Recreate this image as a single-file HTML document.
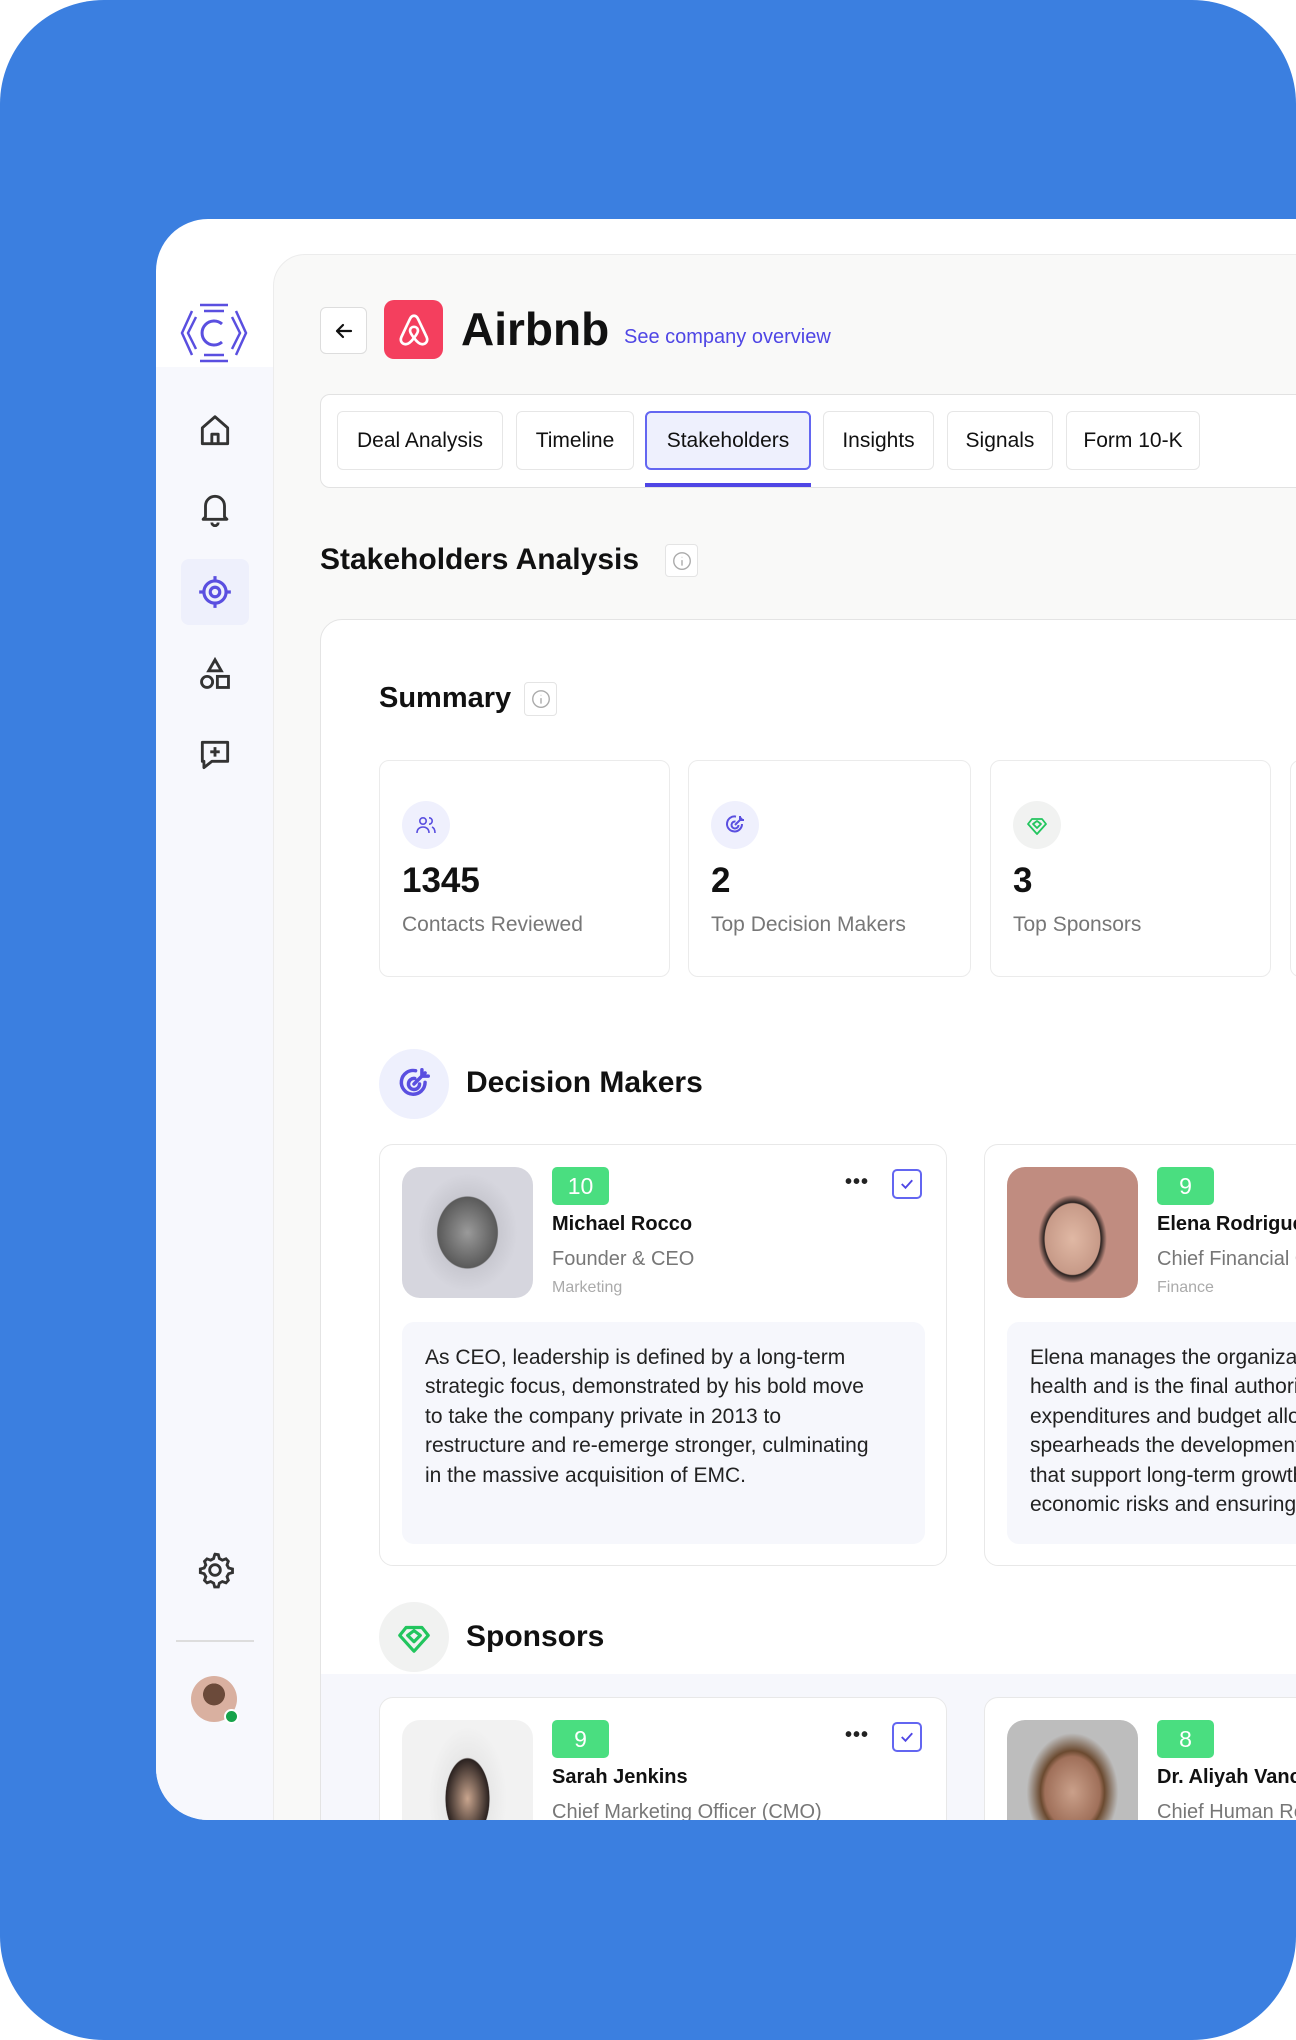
<!DOCTYPE html>
<html><head><meta charset="utf-8"><style>
*{margin:0;padding:0;box-sizing:border-box}
html,body{width:1296px;height:2040px;overflow:hidden}
body{background:#fff;font-family:"Liberation Sans",sans-serif;position:relative}
.wrap{position:absolute;left:0;top:0;width:1296px;height:2040px;overflow:hidden}
.clip{position:absolute;left:0;top:0;width:1296px;height:1820px;overflow:hidden}
.bg{position:absolute;left:0;top:0;width:1296px;height:2040px;background:#3b7fe0;border-radius:104px}
.panel{position:absolute;left:156px;top:219px;width:1140px;height:1601px;background:#fff;border-radius:52px 0 0 52px;overflow:hidden}
.side{position:absolute;left:0;top:148px;width:117px;height:1500px;background:#f7f8fd}
.ab{position:absolute}
.main{position:absolute;left:117px;top:35px;width:1200px;height:1600px;background:#f9f9f8;border:1px solid #ececec;border-radius:32px 0 0 0}
.tab{position:absolute;top:411px;height:59px;border:1px solid #e6e6e6;border-radius:6px;background:#fff;font-size:21px;color:#111;display:flex;align-items:center;justify-content:center}
.info{position:absolute;border:1px solid #e4e4e4;border-radius:4px;background:#fff;display:flex;align-items:center;justify-content:center}
.stat{position:absolute;top:760px;height:217px;border:1px solid #ebebeb;border-radius:10px;background:#fff}
.stat .ic{position:absolute;left:22px;top:40px;width:48px;height:48px;border-radius:50%;background:#eff0fd;display:flex;align-items:center;justify-content:center}
.stat .n{position:absolute;left:22px;top:100px;font-size:35px;font-weight:bold;color:#111}
.stat .l{position:absolute;left:22px;top:152px;font-size:21px;color:#777}
.card{position:absolute;width:568px;height:422px;border:1px solid #e8e8e8;border-radius:14px;background:#fff}
.photo{position:absolute;left:22px;top:22px;width:131px;height:131px;border-radius:18px}
.badge{position:absolute;left:172px;top:22px;width:57px;height:38px;background:#4ade80;border-radius:5px;color:#fff;font-size:23px;display:flex;align-items:center;justify-content:center}
.nm{position:absolute;left:172px;top:68px;font-size:20px;font-weight:bold;color:#111;white-space:nowrap}
.tt{position:absolute;left:172px;top:103px;font-size:20px;color:#777;white-space:nowrap}
.dp{position:absolute;left:172px;top:134px;font-size:16px;color:#aaa}
.dots{position:absolute;left:465px;top:26px;font-size:20px;font-weight:bold;letter-spacing:1px;color:#222}
.chk{position:absolute;left:512px;top:24px;width:30px;height:30px;border:2px solid #6366f1;border-radius:5px;display:flex;align-items:center;justify-content:center}
.desc{position:absolute;left:22px;top:177px;width:523px;height:222px;background:#f6f7fc;border-radius:12px;padding:21px 23px;font-size:21px;line-height:29.4px;color:#222;white-space:nowrap;overflow:hidden}
.sec{position:absolute;left:379px;width:70px;height:70px;border-radius:50%;display:flex;align-items:center;justify-content:center}
.sect{position:absolute;left:466px;font-size:30px;font-weight:bold;color:#111}
</style></head><body>
<div class="wrap">
<div class="bg"></div>
<div class="clip">
<div class="panel">
  <div class="side"></div>
  <svg class="ab" style="left:22px;top:78px" width="72" height="72" viewBox="0 0 72 72" fill="none" stroke="#5a4fe0" stroke-width="2.5">
    <path d="M22 8 L50 8 M14 14 L4 36 L14 58 M58 14 L68 36 L58 58 M22 64 L50 64"/>
    <path d="M18 20 L10 36 L18 52 M54 20 L62 36 L54 52 M26 14 L46 14 M26 58 L46 58"/>
    <path d="M44 27 A12 12 0 1 0 44 45" stroke-width="3"/>
  </svg>
  <svg class="ab" style="left:40px;top:193px" width="38" height="38" viewBox="0 0 24 24" fill="none" stroke="#333" stroke-width="1.8" stroke-linejoin="round"><path d="M4 10 L12 3 L20 10 V20 H4 Z M10 20 V14 H14 V20"/></svg>
  <svg class="ab" style="left:40px;top:271px" width="38" height="38" viewBox="0 0 24 24" fill="none" stroke="#333" stroke-width="1.8" stroke-linejoin="round"><path d="M6 17 V10 a6 6 0 0 1 12 0 V17 L19.5 18.5 H4.5 Z M10 20.5 a2 2 0 0 0 4 0"/></svg>
  <div class="ab" style="left:25px;top:340px;width:68px;height:66px;background:#eef0fc;border-radius:8px"></div>
  <svg class="ab" style="left:40px;top:354px" width="38" height="38" viewBox="0 0 24 24" fill="none" stroke="#5a4fe0" stroke-width="2"><circle cx="12" cy="12" r="7"/><circle cx="12" cy="12" r="3"/><path d="M12 2v3M12 19v3M2 12h3M19 12h3"/></svg>
  <svg class="ab" style="left:40px;top:436px" width="38" height="38" viewBox="0 0 24 24" fill="none" stroke="#333" stroke-width="1.8"><path d="M12 3 L16 10 H8 Z"/><circle cx="7" cy="17" r="3.5"/><rect x="13.5" y="13.5" width="7" height="7"/></svg>
  <svg class="ab" style="left:40px;top:517px" width="38" height="38" viewBox="0 0 24 24" fill="none" stroke="#333" stroke-width="1.8" stroke-linejoin="round"><path d="M4 4 H20 V16 H10 L5 20 V16 H4 Z M12 7 V13 M9 10 H15"/></svg>
  <svg class="ab" style="left:39px;top:1331px" width="40" height="40" viewBox="0 0 24 24" fill="none" stroke="#333" stroke-width="1.7"><circle cx="12" cy="12" r="3.2"/><path d="M12 2.5l2 .3.6 2.3 1.8 1 2.2-.8 1.4 1.5-.8 2.2 1 1.8 2.3.6v2.2l-2.3.6-1 1.8.8 2.2-1.4 1.5-2.2-.8-1.8 1-.6 2.3h-2.2l-.6-2.3-1.8-1-2.2.8-1.5-1.5.8-2.2-1-1.8-2.3-.6v-2.2l2.3-.6 1-1.8-.8-2.2 1.5-1.5 2.2.8 1.8-1 .6-2.3z"/></svg>
  <div class="ab" style="left:20px;top:1421px;width:78px;height:2px;background:#ddd"></div>
  <div class="ab" style="left:35px;top:1457px;width:46px;height:46px;border-radius:50%;background:radial-gradient(circle at 50% 40%,#6b4a3a 0 30%,#d9b0a0 31% 100%)"></div>
  <div class="ab" style="left:68px;top:1490px;width:15px;height:15px;border-radius:50%;background:#16a34a;border:2px solid #fff"></div>
  <div class="main"></div>
</div>

<div class="ab" style="left:320px;top:307px;width:47px;height:47px;border:1px solid #ddd;border-radius:6px;background:#fff;display:flex;align-items:center;justify-content:center">
<svg width="24" height="24" viewBox="0 0 24 24" fill="none" stroke="#111" stroke-width="2.2" stroke-linecap="round" stroke-linejoin="round"><path d="M19 12H5M11 6l-6 6 6 6"/></svg></div>
<div class="ab" style="left:384px;top:300px;width:59px;height:59px;background:#f43f5e;border-radius:10px;display:flex;align-items:center;justify-content:center">
<svg width="38" height="38" viewBox="0 0 24 24" fill="none" stroke="#fff" stroke-width="1.7" stroke-linejoin="round"><path d="M12 3 C10 3 9.5 5 8 8 L4 16.5 C3 19 4.5 21 6.8 21 C8.8 21 10.5 19 12 17 C13.5 19 15.2 21 17.2 21 C19.5 21 21 19 20 16.5 L16 8 C14.5 5 14 3 12 3 Z"/><path d="M12 17 C10 14.5 9.5 13.5 9.5 12.5 C9.5 11 10.6 10 12 10 C13.4 10 14.5 11 14.5 12.5 C14.5 13.5 14 14.5 12 17 Z"/></svg></div>
<div class="ab" style="left:461px;top:302px;font-size:46px;font-weight:bold;color:#111">Airbnb</div>
<div class="ab" style="left:624px;top:326px;font-size:20px;color:#4f46e5">See company overview</div>

<div class="ab" style="left:320px;top:394px;width:1000px;height:94px;background:#fff;border:1px solid #e2e2e2;border-radius:10px"></div>
<div class="tab" style="left:337px;width:166px">Deal Analysis</div>
<div class="tab" style="left:516px;width:118px">Timeline</div>
<div class="tab" style="left:645px;width:166px;background:#eef0fd;border:2px solid #6366f1">Stakeholders</div>
<div class="ab" style="left:645px;top:483px;width:166px;height:4px;background:#4f46e5"></div>
<div class="tab" style="left:823px;width:111px">Insights</div>
<div class="tab" style="left:947px;width:106px">Signals</div>
<div class="tab" style="left:1066px;width:134px">Form 10-K</div>

<div class="ab" style="left:320px;top:543px;font-size:30px;font-weight:bold;color:#111">Stakeholders Analysis</div>
<div class="info" style="left:665px;top:544px;width:33px;height:33px"><svg width="22" height="22" viewBox="0 0 24 24" fill="none" stroke="#aaa" stroke-width="1.5"><circle cx="12" cy="12" r="9"/><path d="M12 11v6M12 7.5v.5"/></svg></div>

<div class="ab" style="left:320px;top:619px;width:1000px;height:1300px;background:#fff;border:1px solid #e4e4e4;border-radius:22px"></div>
<div class="ab" style="left:379px;top:682px;font-size:29px;font-weight:bold;color:#111">Summary</div>
<div class="info" style="left:524px;top:682px;width:33px;height:34px"><svg width="22" height="22" viewBox="0 0 24 24" fill="none" stroke="#aaa" stroke-width="1.5"><circle cx="12" cy="12" r="9"/><path d="M12 11v6M12 7.5v.5"/></svg></div>

<div class="stat" style="left:379px;width:291px"><div class="ic"><svg width="24" height="24" viewBox="0 0 24 24" fill="none" stroke="#5a4fe0" stroke-width="1.6"><circle cx="9" cy="8" r="3.2"/><path d="M3 20c0-4 2.7-6 6-6s6 2 6 6M15 4.8a3.2 3.2 0 0 1 0 6.4M18 14c2 .8 3 2.8 3 6"/></svg></div><div class="n">1345</div><div class="l">Contacts Reviewed</div></div>
<div class="stat" style="left:688px;width:283px"><div class="ic"><svg width="24" height="24" viewBox="0 0 24 24" fill="none" stroke="#5a4fe0" stroke-width="2"><path d="M19 11a7.5 7.5 0 1 1-6-7.4M15.5 12a3.5 3.5 0 1 1-3-3.5M12 12l7-7M17 3v4h4"/></svg></div><div class="n">2</div><div class="l">Top Decision Makers</div></div>
<div class="stat" style="left:990px;width:281px"><div class="ic" style="background:#f1f2f1"><svg width="24" height="24" viewBox="0 0 24 24" fill="none" stroke="#22c55e" stroke-width="1.8" stroke-linejoin="round"><path d="M12 21L3 11l4-5h10l4 5z M8 11l4-3 4 3-4 4z"/></svg></div><div class="n">3</div><div class="l">Top Sponsors</div></div>
<div class="stat" style="left:1290px;width:281px"></div>

<div class="sec" style="top:1049px;background:#eef0fd"><svg width="38" height="38" viewBox="0 0 24 24" fill="none" stroke="#5a4fe0" stroke-width="2.2" stroke-linecap="round"><path d="M19 11a7.5 7.5 0 1 1-6-7.4M15.5 12a3.5 3.5 0 1 1-3-3.5M12 12l7-7M17 3v4h4"/></svg></div>
<div class="sect" style="top:1066px">Decision Makers</div>

<div class="card" style="left:379px;top:1144px">
  <div class="photo" style="background:radial-gradient(ellipse 38% 45% at 50% 50%,#9a9a9a,#5a5a5a 60%,#c8c8d0 62%,#d6d6de)"></div>
  <div class="badge">10</div>
  <div class="nm">Michael Rocco</div><div class="tt">Founder &amp; CEO</div><div class="dp">Marketing</div>
  <div class="dots">•••</div>
  <div class="chk"><svg width="18" height="18" viewBox="0 0 24 24" fill="none" stroke="#4f46e5" stroke-width="2.5"><path d="M5 12l5 5 9-10"/></svg></div>
  <div class="desc">As CEO, leadership is defined by a long-term<br>strategic focus, demonstrated by his bold move<br>to take the company private in 2013 to<br>restructure and re-emerge stronger, culminating<br>in the massive acquisition of EMC.</div>
</div>
<div class="card" style="left:984px;top:1144px">
  <div class="photo" style="background:radial-gradient(ellipse 35% 45% at 50% 55%,#e0b8a4,#c79a88 60%,#2a2220 62%,#c08c80 75%)"></div>
  <div class="badge">9</div>
  <div class="nm">Elena Rodriguez</div><div class="tt">Chief Financial Officer</div><div class="dp">Finance</div>
  <div class="desc">Elena manages the organization's financial<br>health and is the final authority on<br>expenditures and budget allocations and<br>spearheads the development of strategies<br>that support long-term growth, mitigating<br>economic risks and ensuring stability.</div>
</div>

<div class="sec" style="top:1602px;background:#f1f2f1"><svg width="38" height="38" viewBox="0 0 24 24" fill="none" stroke="#22c55e" stroke-width="2" stroke-linejoin="round"><path d="M12 21L3 11l4-5h10l4 5z M8 11l4-3 4 3-4 4z"/></svg></div>
<div class="sect" style="top:1620px">Sponsors</div>
<div class="ab" style="left:321px;top:1674px;width:1000px;height:146px;background:#f6f7fc"></div>
<div class="card" style="left:379px;top:1697px">
  <div class="photo" style="background:radial-gradient(ellipse 30% 55% at 50% 60%,#c9a58e,#2b2220 55%,#e8e8e8 57%,#f2f2f2)"></div>
  <div class="badge">9</div>
  <div class="nm">Sarah Jenkins</div><div class="tt">Chief Marketing Officer (CMO)</div>
  <div class="dots">•••</div>
  <div class="chk"><svg width="18" height="18" viewBox="0 0 24 24" fill="none" stroke="#4f46e5" stroke-width="2.5"><path d="M5 12l5 5 9-10"/></svg></div>
</div>
<div class="card" style="left:984px;top:1697px">
  <div class="photo" style="background:radial-gradient(ellipse 35% 45% at 50% 55%,#caa08a,#a0705a 60%,#6b4a30 70%,#bdbdbd)"></div>
  <div class="badge">8</div>
  <div class="nm">Dr. Aliyah Vance</div><div class="tt">Chief Human Resources</div>
</div>
</div>
</div>
</body></html>
